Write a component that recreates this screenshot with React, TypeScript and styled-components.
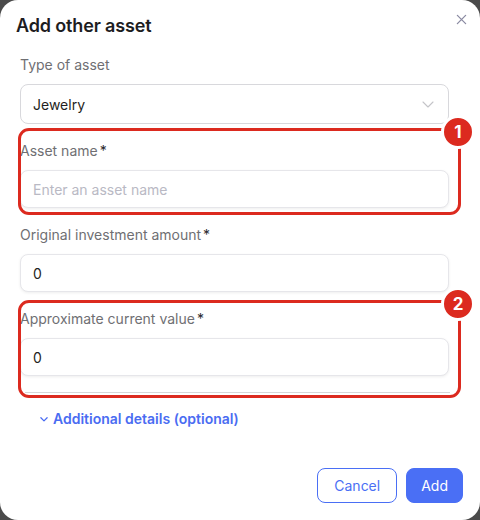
import React from 'react';
import styled, { createGlobalStyle } from 'styled-components';

const GlobalStyle = createGlobalStyle`
  html, body {
    margin: 0;
    padding: 0;
    background: #4b4b4b;
  }
  body {
    font-family: Inter, 'Liberation Sans', sans-serif;
  }
`;

const Dialog = styled.div`
  width: 480px;
  height: 520px;
  box-sizing: border-box;
  background: #ffffff;
  border-radius: 18px;
  padding: 14px 17px 17px 20px;
  display: flex;
  flex-direction: column;
  position: relative;
`;

const Header = styled.div`
  display: flex;
  align-items: center;
  justify-content: space-between;
  margin-left: -4px;
  height: 24px;
`;

const Title = styled.h2`
  margin: 0;
  font-size: 18px;
  line-height: 24px;
  font-weight: 600;
  letter-spacing: -0.15px;
  color: #1d1d1f;
`;

const CloseButton = styled.button`
  position: absolute;
  top: 12px;
  right: 12px;
  width: 14px;
  height: 14px;
  border: none;
  background: none;
  padding: 0;
  display: flex;
  align-items: center;
  justify-content: center;
`;

const Form = styled.div`
  display: flex;
  flex-direction: column;
  gap: 17px;
  margin-top: 17px;
  width: 429px;
`;

const Field = styled.div`
  position: relative;
  display: flex;
  flex-direction: column;
  gap: 9px;
`;

const Label = styled.label`
  font-size: 14px;
  line-height: 20px;
  color: #6f6f73;
`;

const Required = styled.span`
  color: #2a2a2e;
  margin-left: 2px;
`;

const InputBox = styled.div<{ $tall?: boolean; $strong?: boolean }>`
  height: ${(p) => (p.$tall ? '40px' : '38px')};
  box-sizing: border-box;
  border: 1px solid ${(p) => (p.$strong ? '#d8d8dc' : '#e6e6ea')};
  border-radius: 8px;
  background: #fff;
  box-shadow: ${(p) => (p.$strong ? 'none' : '0 1px 3px rgba(0, 0, 0, 0.07)')};
  display: flex;
  align-items: center;
  justify-content: space-between;
  padding: 0 12px;
  font-size: 14px;
  color: #1f1f22;
`;

const Placeholder = styled.span`
  color: #b9b9c4;
`;

// red callout drawn over a field, with a numbered badge on its corner
const Callout = styled.div<{ $top: number; $bottom: number }>`
  position: absolute;
  top: ${(p) => -p.$top}px;
  bottom: ${(p) => -p.$bottom}px;
  left: -2px;
  right: -12px;
  border: 3px solid #dc2a1f;
  border-radius: 11px;
  pointer-events: none;
`;

const Badge = styled.div`
  position: absolute;
  top: -16px;
  right: -17px;
  width: 28px;
  height: 28px;
  border-radius: 50%;
  background: #dc2a1f;
  border: 3px solid #ffffff;
  color: #ffffff;
  font-size: 17px;
  font-weight: 700;
  display: flex;
  align-items: center;
  justify-content: center;
`;

const Divider = styled.div`
  height: 1px;
  background: #d6d6d8;
  margin: 16px 0 0 5px;
  width: 425px;
`;

const Disclosure = styled.button`
  display: flex;
  align-items: center;
  gap: 4px;
  margin: 16px 0 0 19px;
  padding: 0;
  border: none;
  background: none;
  font-family: inherit;
  font-size: 14px;
  line-height: 20px;
  font-weight: 600;
  color: #4a6cf2;
`;

const Footer = styled.div`
  margin-top: auto;
  display: flex;
  justify-content: flex-end;
  gap: 9px;
`;

const Button = styled.button<{ $primary?: boolean }>`
  height: 35px;
  box-sizing: border-box;
  padding: 0 ${(p) => (p.$primary ? '14px' : '16px')};
  border-radius: 8px;
  font-family: inherit;
  font-size: 14px;
  border: 1px solid #4a6ff5;
  background: ${(p) => (p.$primary ? '#4a6ff5' : '#ffffff')};
  color: ${(p) => (p.$primary ? '#ffffff' : '#4a6ff5')};
`;

const Chevron = ({ size, color, stroke }: { size: number; color: string; stroke: number }) => (
  <svg width={size} height={size} viewBox="0 0 16 16" fill="none">
    <path d="M3 6l5 5 5-5" stroke={color} strokeWidth={stroke} strokeLinecap="round" strokeLinejoin="round" />
  </svg>
);

export default function App() {
  return (
    <>
      <GlobalStyle />
      <Dialog>
        <Header>
          <Title>Add other asset</Title>
        </Header>
        <CloseButton aria-label="Close">
          <svg width="11" height="11" viewBox="0 0 12 12" fill="none">
            <path d="M1.5 1.5l9 9M10.5 1.5l-9 9" stroke="#8a8aa2" strokeWidth="1.4" strokeLinecap="round" />
          </svg>
        </CloseButton>

        <Form>
          <Field>
            <Label>Type of asset</Label>
            <InputBox $tall $strong>
              Jewelry
              <Chevron size={16} color="#c4c4c8" stroke={1.1} />
            </InputBox>
          </Field>

          <Field>
            <Label>
              Asset name<Required>*</Required>
            </Label>
            <InputBox>
              <Placeholder>Enter an asset name</Placeholder>
            </InputBox>
            <Callout $top={13} $bottom={7}>
              <Badge>1</Badge>
            </Callout>
          </Field>

          <Field>
            <Label>
              Original investment amount<Required>*</Required>
            </Label>
            <InputBox>0</InputBox>
          </Field>

          <Field>
            <Label>
              Approximate current value<Required>*</Required>
            </Label>
            <InputBox>0</InputBox>
            <Callout $top={9} $bottom={22}>
              <Badge>2</Badge>
            </Callout>
          </Field>
        </Form>

        <Divider />

        <Disclosure>
          <Chevron size={10} color="#4a6cf2" stroke={2} />
          Additional details (optional)
        </Disclosure>

        <Footer>
          <Button>Cancel</Button>
          <Button $primary>Add</Button>
        </Footer>
      </Dialog>
    </>
  );
}
